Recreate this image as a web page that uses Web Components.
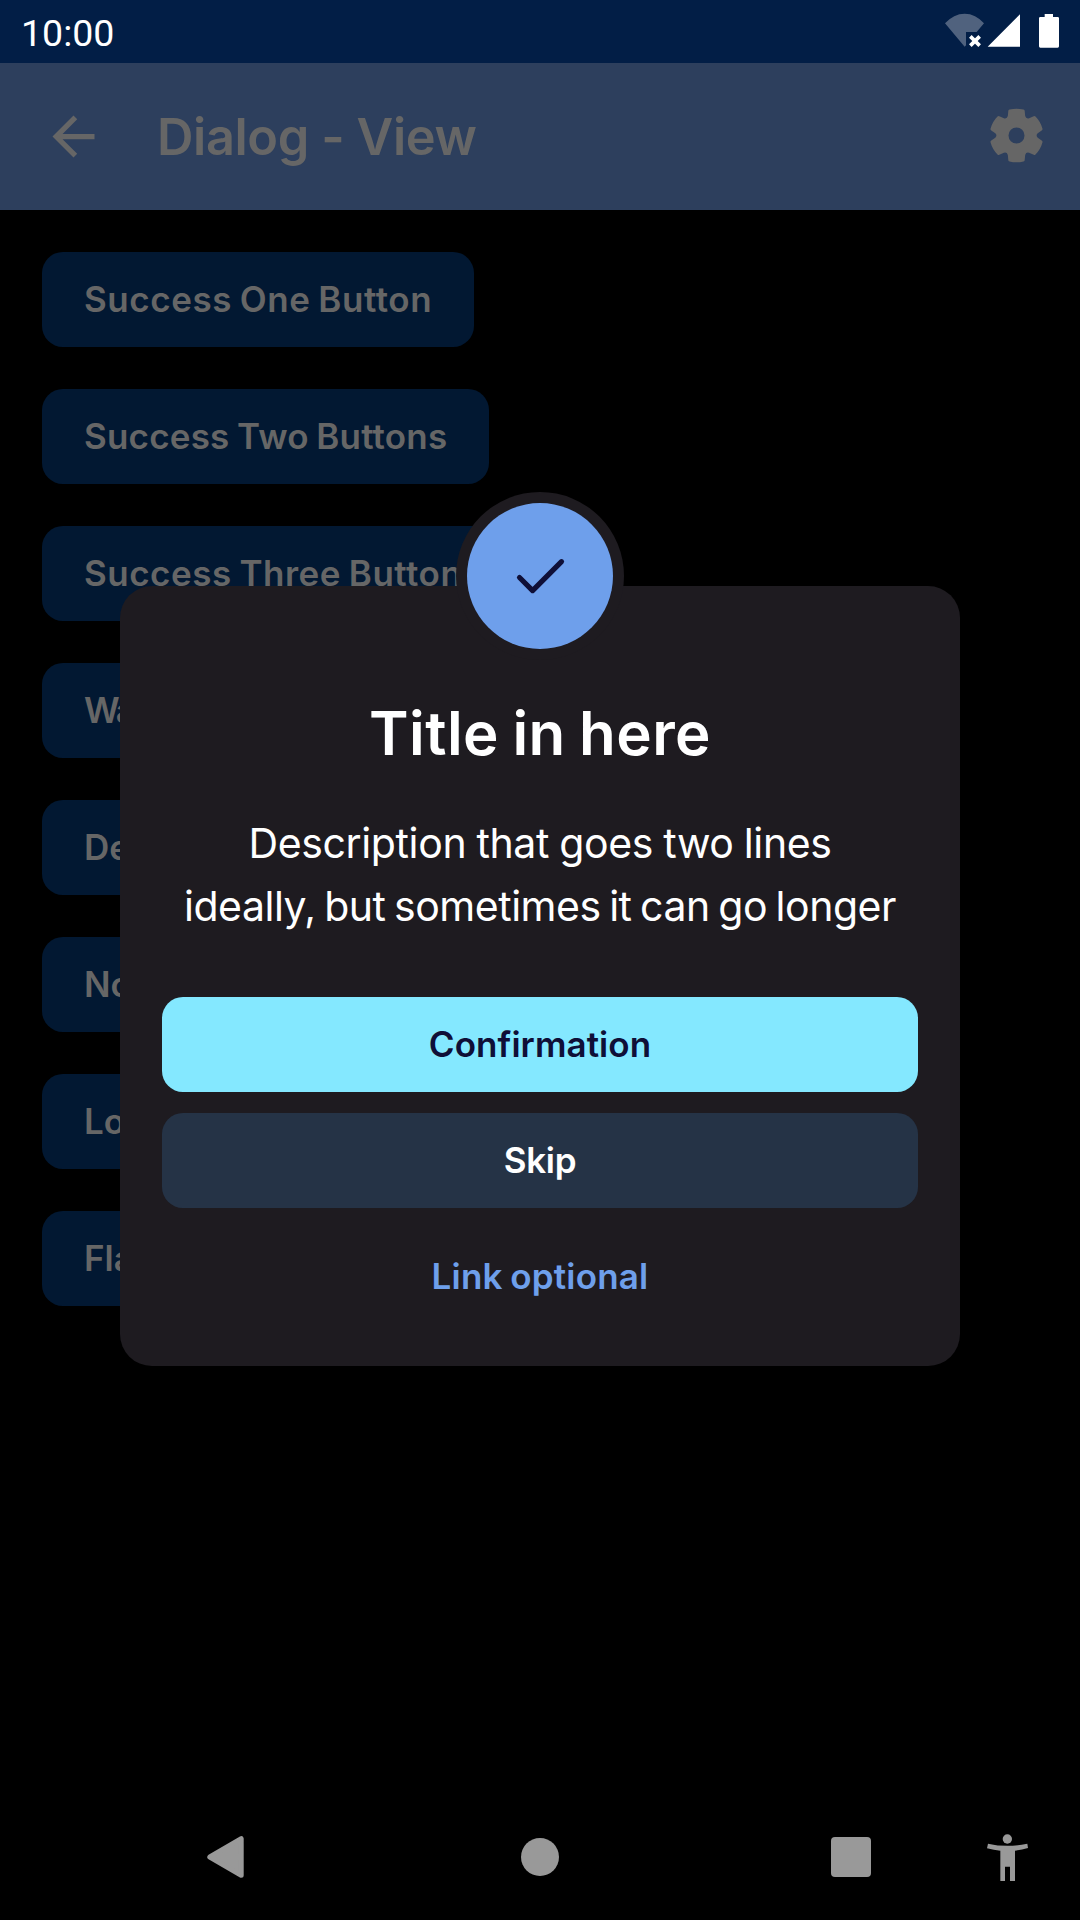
<!DOCTYPE html>
<html lang="en">
<head>
<meta charset="utf-8">
<title>Dialog - View</title>
<style>
  html, body { margin: 0; background: #000; }
  body { width: 1080px; height: 1920px; overflow: hidden; font-family: Inter, "Liberation Sans", sans-serif; }
</style>
</head>
<body>
<phone-screen>
  <status-bar slot="status">10:00</status-bar>
  <app-bar slot="header">Dialog - View</app-bar>
  <action-button style="--track:.55px">Success One Button</action-button>
  <action-button style="--track:.2px">Success Two Buttons</action-button>
  <action-button style="--track:.5px">Success Three Button</action-button>
  <action-button style="--track:-2px">Wa</action-button>
  <action-button>De</action-button>
  <action-button>No</action-button>
  <action-button>Lo</action-button>
  <action-button>Fla</action-button>
  <nav-bar slot="nav"></nav-bar>
  <feedback-dialog slot="dialog">
    <span slot="title">Title in here</span>
    <span slot="line1">Description that goes two lines</span>
    <span slot="line2">ideally, but sometimes it can go longer</span>
    <action-button slot="actions" style="--bg:#84e8ff;--fg:#0f0f37;--track:.07px">Confirmation</action-button>
    <action-button slot="actions" style="--bg:#253346;--fg:#fff;--track:-.3px">Skip</action-button>
    <action-button slot="actions" style="--bg:transparent;--fg:#6e9feb;--track:.2px">Link optional</action-button>
  </feedback-dialog>
</phone-screen>
<script>
const define = (name, html) => customElements.define(name, class extends HTMLElement {
  constructor() {
    super();
    this.attachShadow({ mode: 'open' }).innerHTML = html;
  }
});

// Six-toothed cog outline, built tooth by tooth from polar points around (0,0).
function cogPath() {
  let d = '';
  for (let i = 0; i < 6; i++) {
    const p = (deg, r) => {
      const a = (deg + i * 60) * Math.PI / 180;
      return (r * Math.sin(a)).toFixed(2) + ' ' + (-r * Math.cos(a)).toFixed(2);
    };
    d += (i ? 'L' : 'M') + p(-24, 64) + 'L' + p(-19, 76) + 'Q' + p(-18, 81) + ' ' + p(-15, 80.5) +
      'A80.5 80.5 0 0 1 ' + p(15, 80.5) + 'Q' + p(18, 81) + ' ' + p(19, 76) +
      'L' + p(24, 64) + 'Q' + p(30, 57) + ' ' + p(36, 64);
  }
  return d + 'ZM24 0A24 24 0 1 0 -24 0A24 24 0 1 0 24 0Z';
}

define('phone-screen', `
  <style>
    :host { display: flex; flex-direction: column; position: relative; width: 1080px; height: 1920px; background: #000; overflow: hidden; }
    main { flex: 1; display: flex; flex-direction: column; align-items: flex-start; gap: 42px; padding: 42px; }
  </style>
  <slot name="status"></slot>
  <slot name="header"></slot>
  <main><slot></slot></main>
  <slot name="nav"></slot>
  <slot name="dialog"></slot>`);

define('status-bar', `
  <style>
    :host { display: flex; justify-content: space-between; align-items: flex-start; box-sizing: border-box; height: 63px; padding: 4px 15px 0 21px; background: #021e46; color: #fff; font: 37.500px/59px Roboto, sans-serif; }
    svg { display: block; width: 130px; height: 52px; }
  </style>
  <span><slot></slot></span>
  <svg viewBox="0 0 390 156">
    <path fill="#50627e" d="M30 58Q56 29 89 29T147 58L125 84H93V124L89 128Z"/>
    <path stroke="#fff" stroke-width="11" d="M106 97L134 125M134 97L106 125"/>
    <path fill="#fff" d="M158 128.500L255 30.500V128.500ZM329 30H354V39H368Q372 39 372 43V127Q372 131 368 131H316Q312 131 312 127V43Q312 39 316 39H329Z"/>
  </svg>`);

define('app-bar', `
  <style>
    :host { display: flex; align-items: center; box-sizing: border-box; height: 147px; padding: 0 32px 0 42px; background: #2d3f5d; color: #666; font-size: 50.500px; font-weight: 600; letter-spacing: -.4px; }
    svg { display: block; width: 63px; height: 63px; fill: #666; }
    span { flex: 1; padding-left: 52px; }
    .cog { margin-top: -2px; }
  </style>
  <svg viewBox="0 0 24 24"><path d="M20 11H7.830l5.590-5.590L12 4l-8 8 8 8 1.410-1.410L7.830 13H20z"/></svg>
  <span><slot></slot></span>
  <svg class="cog" viewBox="-94.500 -94.500 189 189"><path fill-rule="evenodd" d="${cogPath()}"/></svg>`);

define('action-button', `
  <style>
    :host { display: flex; align-items: center; justify-content: center; box-sizing: border-box; height: 95px; padding: 0 42px; border-radius: 21px; background: var(--bg, #021832); color: var(--fg, #666); font-size: 35px; font-weight: 600; line-height: 95px; letter-spacing: var(--track, 0); word-spacing: -1.500px; white-space: nowrap; }
  </style>
  <slot></slot>`);

define('feedback-dialog', `
  <style>
    :host { position: absolute; left: 120px; top: 586px; width: 840px; height: 780px; box-sizing: border-box; padding: 111px 42px 42px; border-radius: 32px; background: #1e1b20; color: #fff; text-align: center; display: flex; flex-direction: column; }
    .badge { position: absolute; left: 336px; top: -94px; width: 168px; height: 168px; }
    h1 { margin: 0 0 43px; font-size: 60px; line-height: 72px; font-weight: 600; letter-spacing: .4px; word-spacing: -2px; }
    p { margin: 0 0 59px; font-size: 41px; line-height: 63px; display: flex; flex-direction: column; }
    .one { letter-spacing: -.36px; word-spacing: -1px; }
    .two { letter-spacing: -.48px; word-spacing: -2.500px; white-space: nowrap; }
    .actions { display: flex; flex-direction: column; gap: 21px; }
  </style>
  <svg class="badge" viewBox="0 0 168 168">
    <circle cx="84" cy="84" r="84" fill="#1e1b20"/>
    <circle cx="84" cy="84" r="73" fill="#6e9feb"/>
    <path d="M63.500 85.500L76.600 98.600L105.500 69.700" fill="none" stroke="#0f0f37" stroke-width="5.200" stroke-linecap="round" stroke-linejoin="round"/>
  </svg>
  <h1><slot name="title"></slot></h1>
  <p><span class="one"><slot name="line1"></slot></span><span class="two"><slot name="line2"></slot></span></p>
  <div class="actions"><slot name="actions"></slot></div>`);

define('nav-bar', `
  <style>
    :host { display: grid; grid-template-columns: 314.500px 311px 156.500px 63px; align-items: center; height: 126px; padding-left: 194px; }
    svg { display: block; width: 63px; height: 63px; fill: #999; }
  </style>
  <svg viewBox="0 0 63 63"><path d="M15.800 31L47.200 12.700V49.300Z" stroke="#999" stroke-width="5" stroke-linejoin="round"/></svg>
  <svg viewBox="0 0 63 63"><circle cx="31" cy="31" r="19"/></svg>
  <svg viewBox="0 0 63 63"><rect x="11" y="11" width="40" height="40" rx="4"/></svg>
  <svg viewBox="528 48 189 189"><circle cx="622" cy="87" r="14"/><path d="M564 101Q622 114 682 101L684 114Q665 120 645 122V213H630V170H615V213H601V122Q582 120 561 115Z"/></svg>`);
</script>
</body>
</html>
